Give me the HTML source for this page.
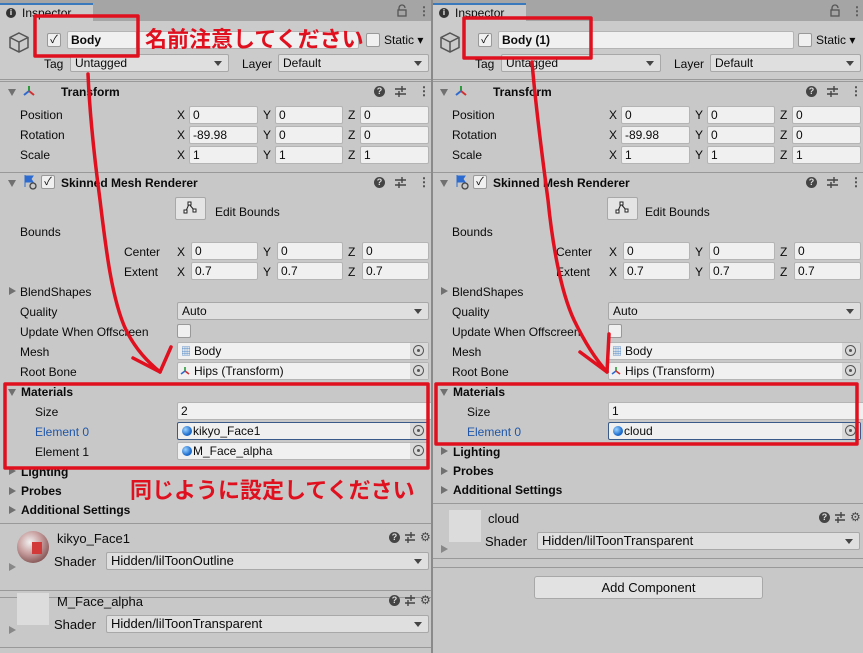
<!DOCTYPE html>
<html><head><meta charset="utf-8">
<style>
*{box-sizing:border-box;margin:0;padding:0}
body{width:863px;height:653px;overflow:hidden;background:#c8c8c8;font-family:"Liberation Sans","Noto Sans CJK JP",sans-serif;font-size:12px;color:#0a0a0a;position:relative}
.p{position:absolute;top:0;width:431px;height:653px;background:#c8c8c8;overflow:hidden}
.p div,.p span,.p svg{position:absolute}
.tb{left:0;top:0;width:431px;height:21px;background:#a5a5a5}
.tab{left:0;top:3px;width:93px;height:18px;background:#cbcbcb;border-top:2px solid #3a79bb;font-size:12px;line-height:15px;padding-left:22px;padding-top:1px}
.info{left:6px;top:3px;width:10px;height:10px;border-radius:50%;background:#333;color:#fff;font-size:8px;line-height:10px;text-align:center;font-weight:bold}
.hd{left:0;top:21px;width:431px;height:59px;background:#cbcbcb;border-bottom:1px solid #999}
.t{line-height:14px;white-space:nowrap}
.b{font-weight:bold}
.f{background:#f0f0f0;border:1px solid #b4b4b4;border-radius:2px;height:18px;line-height:16px;padding-left:3px}
.dd{background:#dfdfdf;border:1px solid #a8a8a8;border-radius:2px;height:18px;line-height:16px;padding-left:4px}
.dd::after{content:"";position:absolute;right:6px;top:6px;border-left:4px solid transparent;border-right:4px solid transparent;border-top:5px solid #444}
.btn{background:#e4e4e4;border:1px solid #a8a8a8;border-radius:2px}
.cb{width:14px;height:14px;background:#f0f0f0;border:1px solid #999;border-radius:2px;font-size:11px;line-height:12px;text-align:center}
.ch{left:0;width:431px;height:21px;border-top:1px solid #999;background:#c8c8c8}
.tri{width:0;height:0;border-left:4px solid transparent;border-right:4px solid transparent;border-top:7px solid #707070}
.trr{width:0;height:0;border-top:4px solid transparent;border-bottom:4px solid transparent;border-left:7px solid #707070}
.q{width:11px;height:11px;border-radius:50%;background:#444;color:#ddd;font-size:9px;line-height:11px;text-align:center;font-weight:bold}
.ln{left:0;width:431px;height:1px;background:#999}
.obj::after{content:"";position:absolute;right:0;top:0;width:18px;height:16px;background:#dadada}
.tg{right:4px;top:2px;width:11px;height:11px;border:1px solid #555;border-radius:50%;z-index:2}
.tg::after{content:"";position:absolute;left:3px;top:3px;width:3px;height:3px;background:#555;border-radius:50%}
.mi{width:10px;height:10px;border-radius:50%;background:radial-gradient(circle at 35% 35%,#9cd3ff,#1f6fd0 60%,#154b9a);top:3px;left:4px}
</style></head><body>

<!-- LEFT PANEL -->
<div class="p" style="left:0">
 <div class="tb"></div>
 <div class="tab"><span class="info">i</span>Inspector</div>
 <svg style="left:396px;top:4px" width="12" height="13"><path d="M3 6V4a3 3 0 0 1 6 0" fill="none" stroke="#555" stroke-width="1.3"/><rect x="2" y="6" width="8" height="6" fill="none" stroke="#555" stroke-width="1.3"/></svg>
 <span class="t b" style="left:418px;top:4px;color:#555">⋮</span>
 <div class="hd"></div>
 <svg style="left:8px;top:31px" width="22" height="24" viewBox="0 0 22 24"><path d="M11 2 L20 6.5 L20 16.5 L11 21 L2 16.5 L2 6.5 Z M2 6.5 L11 11 L20 6.5 M11 11 L11 21" fill="none" stroke="#555" stroke-width="1.5"/></svg>
 <div class="cb" style="left:47px;top:33px">✓</div>
 <div class="f b" style="left:67px;top:31px;width:70px">Body</div>
 <div class="f" style="left:137px;top:31px;width:222px"></div>
 <div class="cb" style="left:366px;top:33px"></div>
 <span class="t" style="left:384px;top:33px">Static ▾</span>
 <span class="t" style="left:44px;top:57px">Tag</span>
 <div class="dd" style="left:70px;top:54px;width:159px">Untagged</div>
 <span class="t" style="left:242px;top:57px">Layer</span>
 <div class="dd" style="left:278px;top:54px;width:151px">Default</div>

 <div class="ch" style="top:81px"></div>
 <div class="tri" style="left:8px;top:89px"></div>
 <svg style="left:22px;top:84px" width="14" height="14"><path d="M7 2V7" stroke="#2a9a3a" stroke-width="2"/><path d="M7 7L2 11" stroke="#2d6bd0" stroke-width="2"/><path d="M7 7L12 11" stroke="#d03030" stroke-width="2"/></svg>
 <span class="t b" style="left:61px;top:85px">Transform</span>
 <div class="q" style="left:374px;top:86px">?</div>
 <svg style="left:394px;top:85px" width="13" height="12"><path d="M1 4H12M1 9H12M8 1V7M5 6V12" stroke="#444" stroke-width="1.4"/></svg>
 <span class="t b" style="left:418px;top:84px;color:#444">⋮</span>

 <span class="t" style="left:20px;top:108px">Position</span>
 <span class="t" style="left:20px;top:128px">Rotation</span>
 <span class="t" style="left:20px;top:148px">Scale</span>
 <span class="t" style="left:177px;top:108px">X</span><div class="f" style="left:189px;top:106px;width:69px">0</div>
 <span class="t" style="left:263px;top:108px">Y</span><div class="f" style="left:275px;top:106px;width:68px">0</div>
 <span class="t" style="left:348px;top:108px">Z</span><div class="f" style="left:360px;top:106px;width:69px">0</div>
 <span class="t" style="left:177px;top:128px">X</span><div class="f" style="left:189px;top:126px;width:69px">-89.98</div>
 <span class="t" style="left:263px;top:128px">Y</span><div class="f" style="left:275px;top:126px;width:68px">0</div>
 <span class="t" style="left:348px;top:128px">Z</span><div class="f" style="left:360px;top:126px;width:69px">0</div>
 <span class="t" style="left:177px;top:148px">X</span><div class="f" style="left:189px;top:146px;width:69px">1</div>
 <span class="t" style="left:263px;top:148px">Y</span><div class="f" style="left:275px;top:146px;width:68px">1</div>
 <span class="t" style="left:348px;top:148px">Z</span><div class="f" style="left:360px;top:146px;width:69px">1</div>

 <div class="ch" style="top:172px"></div>
 <div class="tri" style="left:8px;top:180px"></div>
 <svg style="left:22px;top:174px" width="16" height="16"><path d="M3 1V13M3 2H11L9 5L11 8H3" fill="#2d6bd0" stroke="#2d6bd0"/><circle cx="11" cy="12" r="3" fill="#c8c8c8" stroke="#444" stroke-width="1.3"/></svg>
 <div class="cb" style="left:41px;top:175px">✓</div>
 <span class="t b" style="left:61px;top:176px">Skinned Mesh Renderer</span>
 <div class="q" style="left:374px;top:177px">?</div>
 <svg style="left:394px;top:176px" width="13" height="12"><path d="M1 4H12M1 9H12M8 1V7M5 6V12" stroke="#444" stroke-width="1.4"/></svg>
 <span class="t b" style="left:418px;top:175px;color:#444">⋮</span>

 <div class="btn" style="left:175px;top:197px;width:31px;height:23px"></div>
 <svg style="left:183px;top:201px" width="14" height="14"><path d="M3 10L6 3L11 9" fill="none" stroke="#222"/><rect x="1" y="9" width="3" height="3" fill="#fff" stroke="#222"/><rect x="5" y="1" width="3" height="3" fill="#fff" stroke="#222"/><rect x="10" y="8" width="3" height="3" fill="#fff" stroke="#222"/></svg>
 <span class="t" style="left:215px;top:205px">Edit Bounds</span>
 <span class="t" style="left:20px;top:225px">Bounds</span>
 <span class="t" style="left:124px;top:245px">Center</span>
 <span class="t" style="left:124px;top:265px">Extent</span>
 <span class="t" style="left:177px;top:245px">X</span><div class="f" style="left:191px;top:242px;width:67px">0</div>
 <span class="t" style="left:263px;top:245px">Y</span><div class="f" style="left:277px;top:242px;width:66px">0</div>
 <span class="t" style="left:348px;top:245px">Z</span><div class="f" style="left:362px;top:242px;width:67px">0</div>
 <span class="t" style="left:177px;top:265px">X</span><div class="f" style="left:191px;top:262px;width:67px">0.7</div>
 <span class="t" style="left:263px;top:265px">Y</span><div class="f" style="left:277px;top:262px;width:66px">0.7</div>
 <span class="t" style="left:348px;top:265px">Z</span><div class="f" style="left:362px;top:262px;width:67px">0.7</div>
 <div class="trr" style="left:9px;top:287px"></div>
 <span class="t" style="left:20px;top:285px">BlendShapes</span>
 <span class="t" style="left:20px;top:305px">Quality</span>
 <div class="dd" style="left:177px;top:302px;width:252px">Auto</div>
 <span class="t" style="left:20px;top:325px">Update When Offscreen</span>
 <div class="cb" style="left:177px;top:324px"></div>
 <span class="t" style="left:20px;top:345px">Mesh</span>
 <div class="f obj" style="left:177px;top:342px;width:252px;padding-left:16px">Body<div class="tg"></div></div>
 <span class="t" style="left:181px;top:346px;color:#3a7ac0;font-size:10px">▦</span>
 <span class="t" style="left:20px;top:365px">Root Bone</span>
 <div class="f obj" style="left:177px;top:362px;width:252px;padding-left:16px">Hips (Transform)<div class="tg"></div></div>
 <svg style="left:180px;top:366px" width="10" height="10"><path d="M5 1V5" stroke="#2a9a3a" stroke-width="1.6"/><path d="M5 5L1 8" stroke="#2d6bd0" stroke-width="1.6"/><path d="M5 5L9 8" stroke="#d03030" stroke-width="1.6"/></svg>
 <div class="tri" style="left:8px;top:389px"></div>
 <span class="t b" style="left:21px;top:385px">Materials</span>
 <span class="t" style="left:35px;top:405px">Size</span>
 <div class="f" style="left:177px;top:402px;width:260px">2</div>
 <span class="t" style="left:35px;top:425px;color:#1f56a8">Element 0</span>
 <div class="f obj" style="left:177px;top:422px;width:252px;padding-left:15px;border-color:#3a5a8a">kikyo_Face1<div class="mi"></div><div class="tg"></div></div>
 <span class="t" style="left:35px;top:445px">Element 1</span>
 <div class="f obj" style="left:177px;top:442px;width:252px;padding-left:15px">M_Face_alpha<div class="mi"></div><div class="tg"></div></div>
 <div class="trr" style="left:9px;top:467px"></div>
 <span class="t b" style="left:21px;top:465px">Lighting</span>
 <div class="trr" style="left:9px;top:487px"></div>
 <span class="t b" style="left:21px;top:484px">Probes</span>
 <div class="trr" style="left:9px;top:506px"></div>
 <span class="t b" style="left:21px;top:503px">Additional Settings</span>

 <div class="ln" style="top:523px"></div>
 <div style="left:17px;top:531px;width:32px;height:32px;border-radius:50%;background:radial-gradient(circle at 40% 35%,#f0f0f0,#c9a0a0 40%,#8a5a5a 75%,#bbb)"></div>
 <div style="left:32px;top:542px;width:10px;height:12px;background:#d23a3a"></div>
 <span class="t" style="left:57px;top:532px;font-size:13px">kikyo_Face1</span>
 <div class="q" style="left:389px;top:532px">?</div>
 <svg style="left:404px;top:531px" width="12" height="12"><path d="M1 4H11M1 9H11M7 1V7M4 6V12" stroke="#444" stroke-width="1.4"/></svg>
 <span class="t" style="left:420px;top:530px;color:#444">⚙</span>
 <span class="t" style="left:54px;top:555px;font-size:13px">Shader</span>
 <div class="dd" style="left:106px;top:552px;width:323px;font-size:13px;line-height:16px">Hidden/lilToonOutline</div>
 <div class="trr" style="left:9px;top:563px;border-left-color:#888"></div>
 <div class="ln" style="top:590px"></div>
 <div class="ln" style="top:597px"></div>
 <div style="left:17px;top:593px;width:32px;height:32px;background:#dcdcdc"></div>
 <span class="t" style="left:57px;top:595px;font-size:13px">M_Face_alpha</span>
 <div class="q" style="left:389px;top:595px">?</div>
 <svg style="left:404px;top:594px" width="12" height="12"><path d="M1 4H11M1 9H11M7 1V7M4 6V12" stroke="#444" stroke-width="1.4"/></svg>
 <span class="t" style="left:420px;top:593px;color:#444">⚙</span>
 <span class="t" style="left:54px;top:618px;font-size:13px">Shader</span>
 <div class="dd" style="left:106px;top:615px;width:323px;font-size:13px;line-height:16px">Hidden/lilToonTransparent</div>
 <div class="trr" style="left:9px;top:626px;border-left-color:#888"></div>
 <div class="ln" style="top:647px"></div>
</div>

<div style="position:absolute;left:431px;top:0;width:2px;height:653px;background:#8a8a8a"></div>

<!-- RIGHT PANEL -->
<div class="p" style="left:433px">
 <div class="tb"></div>
 <div class="tab"><span class="info">i</span>Inspector</div>
 <svg style="left:396px;top:4px" width="12" height="13"><path d="M3 6V4a3 3 0 0 1 6 0" fill="none" stroke="#555" stroke-width="1.3"/><rect x="2" y="6" width="8" height="6" fill="none" stroke="#555" stroke-width="1.3"/></svg>
 <span class="t b" style="left:418px;top:4px;color:#555">⋮</span>
 <div class="hd"></div>
 <svg style="left:6px;top:31px" width="22" height="24" viewBox="0 0 22 24"><path d="M11 2 L20 6.5 L20 16.5 L11 21 L2 16.5 L2 6.5 Z M2 6.5 L11 11 L20 6.5 M11 11 L11 21" fill="none" stroke="#555" stroke-width="1.5"/></svg>
 <div class="cb" style="left:45px;top:33px">✓</div>
 <div class="f b" style="left:65px;top:31px;width:296px">Body (1)</div>
 <div class="cb" style="left:365px;top:33px"></div>
 <span class="t" style="left:383px;top:33px">Static ▾</span>
 <span class="t" style="left:42px;top:57px">Tag</span>
 <div class="dd" style="left:68px;top:54px;width:160px">Untagged</div>
 <span class="t" style="left:241px;top:57px">Layer</span>
 <div class="dd" style="left:277px;top:54px;width:151px">Default</div>

 <div class="ch" style="top:81px"></div>
 <div class="tri" style="left:7px;top:89px"></div>
 <svg style="left:21px;top:84px" width="14" height="14"><path d="M7 2V7" stroke="#2a9a3a" stroke-width="2"/><path d="M7 7L2 11" stroke="#2d6bd0" stroke-width="2"/><path d="M7 7L12 11" stroke="#d03030" stroke-width="2"/></svg>
 <span class="t b" style="left:60px;top:85px">Transform</span>
 <div class="q" style="left:373px;top:86px">?</div>
 <svg style="left:393px;top:85px" width="13" height="12"><path d="M1 4H12M1 9H12M8 1V7M5 6V12" stroke="#444" stroke-width="1.4"/></svg>
 <span class="t b" style="left:417px;top:84px;color:#444">⋮</span>

 <span class="t" style="left:19px;top:108px">Position</span>
 <span class="t" style="left:19px;top:128px">Rotation</span>
 <span class="t" style="left:19px;top:148px">Scale</span>
 <span class="t" style="left:176px;top:108px">X</span><div class="f" style="left:188px;top:106px;width:69px">0</div>
 <span class="t" style="left:262px;top:108px">Y</span><div class="f" style="left:274px;top:106px;width:68px">0</div>
 <span class="t" style="left:347px;top:108px">Z</span><div class="f" style="left:359px;top:106px;width:69px">0</div>
 <span class="t" style="left:176px;top:128px">X</span><div class="f" style="left:188px;top:126px;width:69px">-89.98</div>
 <span class="t" style="left:262px;top:128px">Y</span><div class="f" style="left:274px;top:126px;width:68px">0</div>
 <span class="t" style="left:347px;top:128px">Z</span><div class="f" style="left:359px;top:126px;width:69px">0</div>
 <span class="t" style="left:176px;top:148px">X</span><div class="f" style="left:188px;top:146px;width:69px">1</div>
 <span class="t" style="left:262px;top:148px">Y</span><div class="f" style="left:274px;top:146px;width:68px">1</div>
 <span class="t" style="left:347px;top:148px">Z</span><div class="f" style="left:359px;top:146px;width:69px">1</div>

 <div class="ch" style="top:172px"></div>
 <div class="tri" style="left:7px;top:180px"></div>
 <svg style="left:21px;top:174px" width="16" height="16"><path d="M3 1V13M3 2H11L9 5L11 8H3" fill="#2d6bd0" stroke="#2d6bd0"/><circle cx="11" cy="12" r="3" fill="#c8c8c8" stroke="#444" stroke-width="1.3"/></svg>
 <div class="cb" style="left:40px;top:175px">✓</div>
 <span class="t b" style="left:60px;top:176px">Skinned Mesh Renderer</span>
 <div class="q" style="left:373px;top:177px">?</div>
 <svg style="left:393px;top:176px" width="13" height="12"><path d="M1 4H12M1 9H12M8 1V7M5 6V12" stroke="#444" stroke-width="1.4"/></svg>
 <span class="t b" style="left:417px;top:175px;color:#444">⋮</span>

 <div class="btn" style="left:174px;top:197px;width:31px;height:23px"></div>
 <svg style="left:182px;top:201px" width="14" height="14"><path d="M3 10L6 3L11 9" fill="none" stroke="#222"/><rect x="1" y="9" width="3" height="3" fill="#fff" stroke="#222"/><rect x="5" y="1" width="3" height="3" fill="#fff" stroke="#222"/><rect x="10" y="8" width="3" height="3" fill="#fff" stroke="#222"/></svg>
 <span class="t" style="left:212px;top:205px">Edit Bounds</span>
 <span class="t" style="left:19px;top:225px">Bounds</span>
 <span class="t" style="left:123px;top:245px">Center</span>
 <span class="t" style="left:123px;top:265px">Extent</span>
 <span class="t" style="left:176px;top:245px">X</span><div class="f" style="left:190px;top:242px;width:67px">0</div>
 <span class="t" style="left:262px;top:245px">Y</span><div class="f" style="left:276px;top:242px;width:66px">0</div>
 <span class="t" style="left:347px;top:245px">Z</span><div class="f" style="left:361px;top:242px;width:67px">0</div>
 <span class="t" style="left:176px;top:265px">X</span><div class="f" style="left:190px;top:262px;width:67px">0.7</div>
 <span class="t" style="left:262px;top:265px">Y</span><div class="f" style="left:276px;top:262px;width:66px">0.7</div>
 <span class="t" style="left:347px;top:265px">Z</span><div class="f" style="left:361px;top:262px;width:67px">0.7</div>
 <div class="trr" style="left:8px;top:287px"></div>
 <span class="t" style="left:19px;top:285px">BlendShapes</span>
 <span class="t" style="left:19px;top:305px">Quality</span>
 <div class="dd" style="left:175px;top:302px;width:253px">Auto</div>
 <span class="t" style="left:19px;top:325px">Update When Offscreen</span>
 <div class="cb" style="left:175px;top:324px"></div>
 <span class="t" style="left:19px;top:345px">Mesh</span>
 <div class="f obj" style="left:175px;top:342px;width:253px;padding-left:16px">Body<div class="tg"></div></div>
 <span class="t" style="left:179px;top:346px;color:#3a7ac0;font-size:10px">▦</span>
 <span class="t" style="left:19px;top:365px">Root Bone</span>
 <div class="f obj" style="left:175px;top:362px;width:253px;padding-left:16px">Hips (Transform)<div class="tg"></div></div>
 <svg style="left:178px;top:366px" width="10" height="10"><path d="M5 1V5" stroke="#2a9a3a" stroke-width="1.6"/><path d="M5 5L1 8" stroke="#2d6bd0" stroke-width="1.6"/><path d="M5 5L9 8" stroke="#d03030" stroke-width="1.6"/></svg>
 <div class="tri" style="left:7px;top:389px"></div>
 <span class="t b" style="left:20px;top:385px">Materials</span>
 <span class="t" style="left:34px;top:405px">Size</span>
 <div class="f" style="left:175px;top:402px;width:262px">1</div>
 <span class="t" style="left:34px;top:425px;color:#1f56a8">Element 0</span>
 <div class="f obj" style="left:175px;top:422px;width:253px;padding-left:15px;border-color:#3a5a8a">cloud<div class="mi"></div><div class="tg"></div></div>
 <div class="trr" style="left:8px;top:447px"></div>
 <span class="t b" style="left:20px;top:445px">Lighting</span>
 <div class="trr" style="left:8px;top:467px"></div>
 <span class="t b" style="left:20px;top:464px">Probes</span>
 <div class="trr" style="left:8px;top:486px"></div>
 <span class="t b" style="left:20px;top:483px">Additional Settings</span>

 <div class="ln" style="top:503px"></div>
 <div style="left:16px;top:510px;width:32px;height:32px;background:#dcdcdc"></div>
 <span class="t" style="left:55px;top:512px;font-size:13px">cloud</span>
 <div class="q" style="left:386px;top:512px">?</div>
 <svg style="left:401px;top:511px" width="12" height="12"><path d="M1 4H11M1 9H11M7 1V7M4 6V12" stroke="#444" stroke-width="1.4"/></svg>
 <span class="t" style="left:417px;top:510px;color:#444">⚙</span>
 <span class="t" style="left:52px;top:535px;font-size:13px">Shader</span>
 <div class="dd" style="left:104px;top:532px;width:323px;font-size:13px;line-height:16px">Hidden/lilToonTransparent</div>
 <div class="trr" style="left:8px;top:545px;border-left-color:#888"></div>
 <div class="ln" style="top:558px"></div>
 <div class="ln" style="top:567px"></div>
 <div style="left:101px;top:576px;width:229px;height:23px;background:#e2e2e2;border:1px solid #a8a8a8;border-radius:3px;text-align:center;line-height:21px;font-size:13px">Add Component</div>
</div>

<!-- annotations -->
<svg style="position:absolute;left:0;top:0" width="863" height="653">
 <g fill="none" stroke="#e0101f" stroke-width="3.5" stroke-linecap="round" stroke-linejoin="round">
  <rect x="35" y="16" width="103" height="40"/>
  <rect x="464" y="18" width="127" height="40"/>
  <rect x="5" y="384" width="423" height="84"/>
  <rect x="436" y="384" width="421" height="60"/>
  <path d="M88 74 C90 120 96 170 100 200 C106 250 112 300 126 330 C136 350 148 362 160 372"/>
  <path d="M133 358 L160 372 L171 347"/>
  <path d="M532 62 C536 110 544 170 548 200 C552 240 560 290 574 320 C586 345 598 362 607 372"/>
  <path d="M580 352 L607 372 L609 334"/>
 </g>
 <text x="145" y="47" fill="#e0101f" font-size="22" font-weight="bold" font-family="'Liberation Sans','Noto Sans CJK JP',sans-serif">名前注意してください</text>
 <text x="130" y="498" fill="#e0101f" font-size="22" font-weight="bold" font-family="'Liberation Sans','Noto Sans CJK JP',sans-serif">同じように設定してください</text>
</svg>
</body></html>
